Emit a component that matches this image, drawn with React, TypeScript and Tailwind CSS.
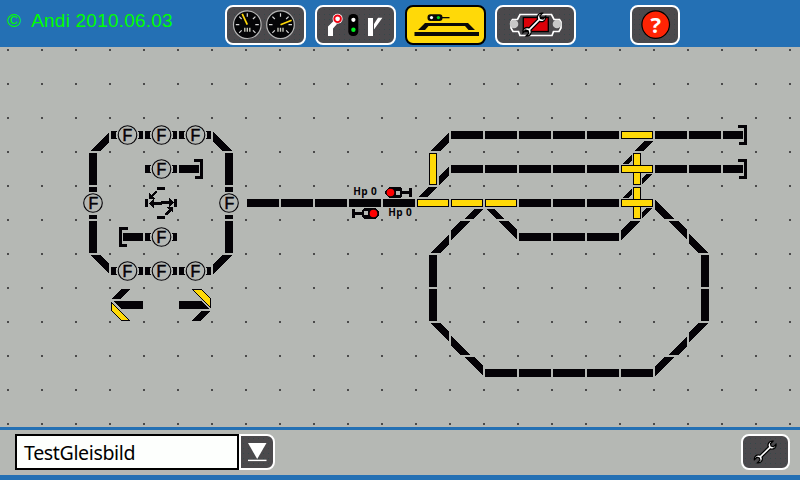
import clsx from "clsx";
import * as React from "react";

const BLACK = "#040206";
const YELLOW = "#ffd908";

type Corner = "BR" | "BL" | "TL" | "TR";

// Diagonal track pieces inside a 34px tile, named after the two edges they join.
const CORNERS: Record<Corner, number[][]> = {
  BR: [[14, 33], [24, 33], [33, 24], [33, 14]],
  BL: [[20, 33], [10, 33], [1, 24], [1, 14]],
  TL: [[1, 20], [1, 10], [10, 1], [20, 1]],
  TR: [[33, 20], [33, 10], [24, 1], [14, 1]],
};

const CORNER_TILES: [Corner, number, number][] = [
  ["BR", 76, 118],
  ["BL", 212, 118],
  ["TR", 76, 254],
  ["TL", 212, 254],
  ["BR", 416, 118],
  ["TL", 450, 220],
  ["BR", 416, 220],
  ["TR", 416, 322],
  ["BL", 450, 322],
  ["TR", 450, 356],
  ["TR", 484, 220],
  ["TL", 620, 220],
  ["BL", 654, 186],
  ["TR", 654, 220],
  ["BL", 688, 220],
  ["TL", 688, 322],
  ["BR", 654, 322],
  ["TL", 654, 356],
];

const ROWS: { y: number; tiles: number[] }[] = [
  { y: 135, tiles: [450, 484, 518, 552, 586, 654, 688] },
  { y: 169, tiles: [450, 484, 518, 552, 586, 654, 688] },
  { y: 203, tiles: [246, 280, 314, 348, 382, 518, 552, 586] },
  { y: 237, tiles: [518, 552, 586] },
  { y: 373, tiles: [484, 518, 552, 586, 620] },
];

const COLUMNS: { x: number; tiles: number[] }[] = [
  { x: 93, tiles: [152, 220] },
  { x: 229, tiles: [152, 220] },
  { x: 433, tiles: [254, 288] },
  { x: 705, tiles: [254, 288] },
];

// Branches of the turnouts, cut off where the yellow blade begins.
const BRANCHES = [
  "464,219 473,219 483,209 474,209",
  "486,209 494,209 504,219 496,219",
  "439,176 449,166 449,176 439,185",
  "418,197 427,197 437,187 428,187",
  "634,151 643,151 653,141 644,141",
  "642,178 646,174 652,174 642,184",
  "642,212 646,208 652,208 642,218",
  "622,164 632,154 632,160 628,164",
  "622,198 632,188 632,194 628,198",
];

function Blade({
  x,
  y,
  vertical,
}: {
  x: number;
  y: number;
  vertical?: boolean;
}) {
  return (
    <rect
      x={x + 0.5}
      y={y + 0.5}
      width={vertical ? 7 : 31}
      height={vertical ? 31 : 7}
      fill={YELLOW}
      stroke={BLACK}
    />
  );
}

function Feedback({
  x,
  y,
  vertical,
}: {
  x: number;
  y: number;
  vertical?: boolean;
}) {
  return (
    <g>
      {vertical ? (
        <>
          <rect x={x + 13} y={y + 1} width={8} height={5} />
          <rect x={x + 13} y={y + 29} width={8} height={4} />
        </>
      ) : (
        <>
          <path d={`M${x + 1} ${y + 13}h6q-2 4 0 8h-6z`} />
          <path d={`M${x + 33} ${y + 13}h-5q2 4 0 8h5z`} />
        </>
      )}
      <circle
        cx={x + (vertical ? 17 : 17.5)}
        cy={y + 17}
        r={9.3}
        fill="none"
        stroke={BLACK}
        strokeWidth={1.1}
        shapeRendering="auto"
      />
      <text
        x={x + 12.5}
        y={y + 22.5}
        fontSize={16}
        stroke={BLACK}
        strokeWidth={0.5}
        fontFamily="'Liberation Sans', sans-serif"
      >
        F
      </text>
    </g>
  );
}

function Buffer({ x, y, flip }: { x: number; y: number; flip?: boolean }) {
  return (
    <g transform={flip ? `translate(${x + 34} ${y}) scale(-1 1)` : `translate(${x} ${y})`}>
      <rect x={1} y={13} width={20} height={8} />
      <path d="M16 7h9v20h-8v-3h5v-14h-6z" />
    </g>
  );
}

function Signal({ transform }: { transform: string }) {
  return (
    <g transform={transform}>
      <path d="M4 0h11l2 2v7l-2 2h-11l-4-4v-3z" />
      <rect x={17} y={4} width={8} height={3} />
      <rect x={24} y={1} width={3} height={9} />
      <rect x={11} y={4} width={4} height={4} fill="#b5b8b4" />
      <circle cx={5.5} cy={5.5} r={3.8} fill="#ff0000" shapeRendering="auto" />
    </g>
  );
}

function TrackPlan() {
  return (
    <svg
      className="block h-[380px] w-full"
      viewBox="0 47 800 380"
      fill={BLACK}
      shapeRendering="crispEdges"
    >
      <defs>
        <pattern
          id="dots"
          x={7}
          y={49}
          width={34}
          height={34}
          patternUnits="userSpaceOnUse"
        >
          <rect width={2} height={2} fill="#4a4a4a" />
        </pattern>
      </defs>
      <rect x={0} y={47} width={800} height={380} fill="url(#dots)" />

      {ROWS.map((row) =>
        row.tiles.map((x) => (
          <rect key={`${x}-${row.y}`} x={x + 1} y={row.y - 4} width={32} height={8} />
        ))
      )}
      {COLUMNS.map((col) =>
        col.tiles.map((y) => (
          <rect key={`${col.x}-${y}`} x={col.x - 4} y={y + 1} width={8} height={32} />
        ))
      )}
      {CORNER_TILES.map(([corner, x, y]) => (
        <polygon
          key={`${x}-${y}`}
          points={CORNERS[corner].map(([px, py]) => `${x + px},${y + py}`).join(" ")}
        />
      ))}
      {BRANCHES.map((points) => (
        <polygon key={points} points={points} />
      ))}

      <Blade x={429} y={153} vertical />
      <Blade x={417} y={199} />
      <Blade x={451} y={199} />
      <Blade x={485} y={199} />
      <Blade x={621} y={131} />
      <Blade x={633} y={153} vertical />
      <Blade x={621} y={165} />
      <Blade x={633} y={187} vertical />
      <Blade x={621} y={199} />

      {[110, 144, 178].map((x) => (
        <React.Fragment key={x}>
          <Feedback x={x} y={118} />
          <Feedback x={x} y={254} />
        </React.Fragment>
      ))}
      <Feedback x={144} y={152} />
      <Feedback x={144} y={220} />
      <Feedback x={76} y={186} vertical />
      <Feedback x={212} y={186} vertical />

      <Buffer x={178} y={152} />
      <Buffer x={110} y={220} flip />
      <Buffer x={722} y={118} />
      <Buffer x={722} y={152} />

      {/* turntable */}
      <rect x={157} y={187} width={8} height={3} />
      <rect x={157} y={216} width={8} height={3} />
      <rect x={145} y={199} width={3} height={8} />
      <rect x={174} y={199} width={3} height={8} />
      <path d="M149 203.5L154 199V202H161V201H169V198L174 202.5L169 207V204H162V205H154V208Z" />
      <path d="M149 199V193L151 195L155 191H157V192L153 196.5L155 199Z" />
      <path d="M173 207V213L171 211L167 215H165V214L169 209.5L167 207Z" />

      {/* standalone turnouts */}
      <polygon points="112,299 121,289 130,289 120,299" />
      <polygon points="113,301 143,301 143,309 121,309" />
      <polygon points="111.5,302.5 129.5,320.5 121.5,320.5 111.5,310.5" fill={YELLOW} stroke={BLACK} />
      <polygon points="192,321 201,311 210,311 201,321" />
      <polygon points="179,301 202,301 209,309 179,309" />
      <polygon points="192.5,289.5 201.5,289.5 210.5,298.5 210.5,307.5" fill={YELLOW} stroke={BLACK} />

      <Signal transform="translate(385 187)" />
      <Signal transform="translate(379 219) rotate(180)" />
      <g fontFamily="'Open Sans', sans-serif" fontWeight={700} fontSize={10}>
        <text x={353.3} y={195} textLength={23.4}>
          Hp 0
        </text>
        <text x={388.3} y={216} textLength={23.4}>
          Hp 0
        </text>
      </g>
    </svg>
  );
}

interface PanelButtonProps extends React.ComponentProps<"button"> {
  active?: boolean;
}

function PanelButton({ active, className, ...props }: PanelButtonProps) {
  return (
    <button
      type="button"
      className={clsx(
        "shrink-0 overflow-hidden border-2",
        active
          ? "border-black bg-[#ffd908]"
          : "border-white bg-[#4b494c] bg-[radial-gradient(#34484a_0.8px,transparent_0.9px)] bg-[size:5px_5px]",
        className
      )}
      {...props}
    />
  );
}

function Wrench({ transform }: { transform: string }) {
  return (
    <path
      transform={transform}
      d="M-1.6-6.5C-5-8-5.4-12.4-2.4-14.6V-10.6L0-9.3L2.4-10.6V-14.6C5.4-12.4 5-8 1.6-6.5V6.5C5 8 5.4 12.4 2.4 14.6V10.6L0 9.3L-2.4 10.6V14.6C-5.4 12.4-5 8-1.6 6.5Z"
      fill="#fff"
      stroke="#000"
      strokeWidth={1.4}
    />
  );
}

function Gauge({ cx, angle }: { cx: number; angle: number }) {
  return (
    <g transform={`translate(${cx} 24.7)`}>
      <circle r={13.8} fill="#050507" stroke="#b4b4b4" strokeWidth={1.2} />
      {[-135, -90, -45, 0, 45, 90, 135].map((tick) => (
        <path
          key={tick}
          d="M0-11.5v3.5"
          stroke="#d8d8d8"
          strokeWidth={1.2}
          transform={`rotate(${tick})`}
        />
      ))}
      <path d="M-2.5 3v4M0 3v4M2.5 3v4" stroke="#c8c8bc" strokeWidth={1.4} />
      <path d="M0 0v-12" stroke={YELLOW} strokeWidth={1.7} transform={`rotate(${angle})`} />
    </g>
  );
}

function Header() {
  return (
    <header className="flex h-[47px] shrink-0 items-start bg-[#2470b4] pt-[5px]">
      <div className="w-[225px] whitespace-pre pl-[7px] pt-0.5 font-['Liberation_Sans',sans-serif] text-[19px] leading-7 tracking-[0.22px] text-[#00ff00]">
        {"©  Andi 2010.06.03"}
      </div>
      <nav className="flex gap-[9px]">
        <PanelButton className="h-10 w-[81px] rounded-lg" aria-label="Control">
          <svg className="block h-9 w-[77px]" viewBox="227 7 77 36">
            <Gauge cx={247.3} angle={-25} />
            <Gauge cx={280.5} angle={68} />
          </svg>
        </PanelButton>
        <PanelButton className="h-10 w-[81px] rounded-lg" aria-label="Keyboard">
          <svg className="block h-9 w-[77px]" viewBox="317 7 77 36">
            <path d="M328 36V26.5L334 20.5L337 24L333 28.5V36Z" fill="#fff" />
            <circle cx={337.6} cy={18.8} r={5} fill="#fff" />
            <circle cx={337.6} cy={18.8} r={3.3} fill="none" stroke="#f00010" strokeWidth={1.9} />
            <rect x={348.3} y={14} width={10} height={22} rx={4.5} fill="#000" />
            <circle cx={353.4} cy={19.8} r={2.1} fill="#fff" />
            <circle cx={353.4} cy={29.8} r={2.2} fill="#00f020" />
            <path d="M368 18h5v18h-5zM374 29.5V24L378 17.8h4.4z" fill="#fff" />
          </svg>
        </PanelButton>
        <PanelButton active className="h-10 w-[81px] rounded-lg" aria-label="Layout">
          <svg className="block h-9 w-[77px]" viewBox="407 7 77 36" fill="#0a0a08">
            <rect x={427.5} y={14.3} width={15} height={6.8} rx={3} />
            <rect x={442} y={17} width={7.5} height={1.3} />
            <circle cx={431.5} cy={17.6} r={1.6} fill="#fff" />
            <circle cx={438.4} cy={17.6} r={1.6} fill="#00d820" />
            <path d="M418 30L425 23H468L475 30H468.5L465 26H428.5L425 30Z" />
            <rect x={414.5} y={32} width={64.5} height={4} />
          </svg>
        </PanelButton>
        <PanelButton className="h-10 w-[81px] rounded-lg" aria-label="Settings">
          <svg className="block h-9 w-[77px]" viewBox="497 7 77 36">
            <path
              d="M520 14.5H551.5L554 19.5H559.5L561 22V28L559 31.5H553.5L552 35.5H520L518.5 31.5H513L511 28V22L512.5 19.5H517.5Z"
              fill="#4b494c"
              stroke="#fff"
              strokeWidth={1.7}
            />
            <circle cx={514} cy={24} r={4.3} fill="#c8c8c8" />
            <circle cx={557} cy={24} r={4.3} fill="#c8c8c8" />
            <rect x={523.3} y={17.5} width={25} height={14} fill="#dc0008" stroke="#000" strokeWidth={1.3} />
            <Wrench transform="translate(534.3 24.6) rotate(45) scale(0.95)" />
          </svg>
        </PanelButton>
      </nav>
      <PanelButton className="ml-[54px] h-10 w-[50px] rounded-lg" aria-label="Help">
        <svg className="block h-9 w-[46px]" viewBox="632 7 46 36">
          <circle cx={655.7} cy={24.6} r={13.8} fill="#ff2404" stroke="#000" strokeWidth={1.2} />
          <text
            x={655.8}
            y={32.8}
            fontFamily="'Open Sans', sans-serif"
            fontWeight={700}
            fontSize={22}
            textAnchor="middle"
            fill="#fff"
          >
            ?
          </text>
        </svg>
      </PanelButton>
    </header>
  );
}

function Footer() {
  return (
    <footer className="flex h-[53px] shrink-0 items-start border-b-[5px] border-t-[3px] border-[#2470b4] pl-[15px] pr-[10px] pt-1">
      <div className="flex">
        <div className="h-9 w-56 border-2 border-black bg-[#fdfffd] pl-[7px] pt-px font-['Noto_Sans',sans-serif] text-[19.6px] leading-8 tracking-[-0.38px] text-black">
          TestGleisbild
        </div>
        <PanelButton className="h-9 w-9 rounded-r-lg" aria-label="Select layout">
          <svg className="block h-8 w-8" viewBox="241 436 32 32" fill="#fff">
            <path d="M248 443H266.5L257.2 459Z" />
            <rect x={248} y={459.7} width={18.5} height={1.4} />
          </svg>
        </PanelButton>
      </div>
      <PanelButton className="ml-auto h-9 w-[49px] rounded-lg" aria-label="Edit layout">
        <svg className="block h-8 w-[45px]" viewBox="743 436 45 32">
          <Wrench transform="translate(765.2 452) rotate(45) scale(0.9)" />
        </svg>
      </PanelButton>
    </footer>
  );
}

export default function App() {
  return (
    <div className="flex h-[480px] w-[800px] flex-col overflow-hidden bg-[#b5b8b4]">
      <Header />
      <main className="flex-1">
        <TrackPlan />
      </main>
      <Footer />
    </div>
  );
}
